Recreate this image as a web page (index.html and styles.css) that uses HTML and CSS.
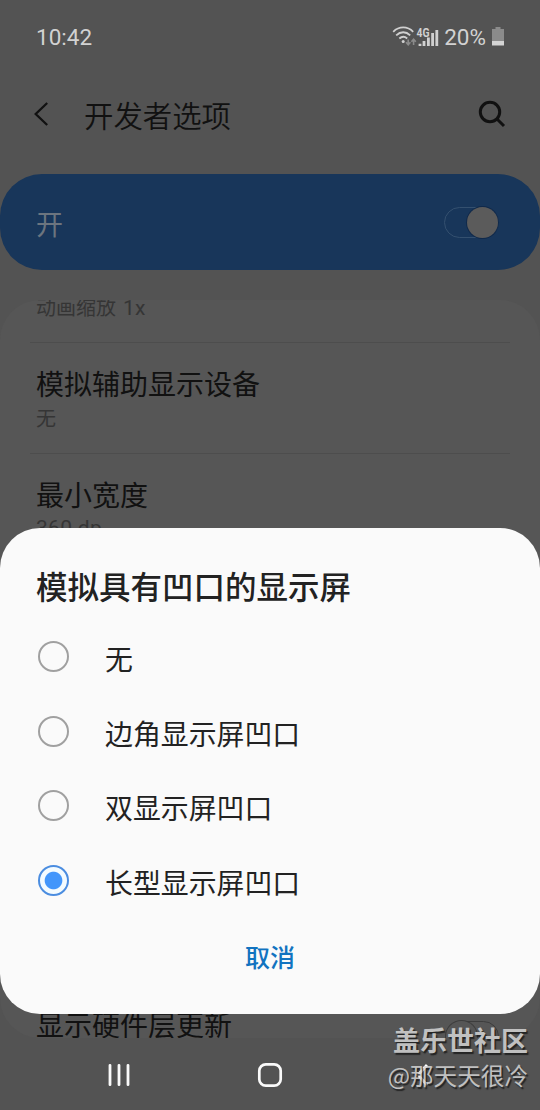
FILE: index.html
```html
<!DOCTYPE html>
<html lang="zh-CN">
<head>
<meta charset="utf-8">
<title>开发者选项</title>
<link rel="stylesheet" href="styles.css">
</head>
<body>
<div class="phone">
  <div class="status">
    <span class="clock">10:42</span>
    <div class="status-icons">
      <svg class="net" width="48" height="24" viewBox="0 0 48 24">
        <g fill="none" stroke="#d0d0d0" stroke-width="1.8">
          <path d="M1.2 6.8C7 1 15.500 1 21.200 6.800"/>
          <path d="M4.200 10.300C8.500 6.200 14 6.200 18.200 10.300"/>
          <path d="M7.300 13.500C9.800 11.300 12.800 11.300 15.200 13.500"/>
        </g>
        <circle cx="11.200" cy="16.500" r="1.500" fill="#d0d0d0"/>
        <path d="M16.200 14.500v5M14 17.200l2.200 2.500 2.200-2.500M21.600 20v-5M19.400 16.800l2.200-2.500 2.200 2.500" fill="none" stroke="#8b8b8b" stroke-width="1.600"/>
        <path d="M28 21v-2.200M32 21v-5M36.400 21v-8.500M40.600 21V8M44.800 21V5" stroke="#d0d0d0" stroke-width="2.800"/>
        <text class="net-type" x="24.500" y="12" textLength="13" lengthAdjust="spacingAndGlyphs">4G</text>
      </svg>
      <span class="percent">20%</span>
      <svg class="battery" width="12" height="19" viewBox="0 0 12 19"><path d="M3.500 0h5v2H12v12H0V2h3.500z" fill="#8b8b8b"/><path d="M0 14h12v4.500H0z" fill="#d4d4d4"/></svg>
    </div>
  </div>
  <header class="header">
    <svg width="16" height="26" viewBox="0 0 16 26"><path d="M14.200 2L2.700 13l11.500 11" fill="none" stroke="#111" stroke-width="2.300"/></svg>
    <h1 class="title">开发者选项</h1>
    <svg width="28" height="28" viewBox="0 0 28 28" fill="none" stroke="#111" stroke-width="3"><circle cx="12" cy="12" r="9.700"/><path d="M19 19l7 7"/></svg>
  </header>
  <div class="master">
    <span>开</span>
    <div class="switch"><div class="knob"></div></div>
  </div>
  <main class="card">
    <div class="row first"><div class="sub">动画缩放 <span class="latin scale">1x</span></div></div>
    <div class="row"><div class="name">模拟辅助显示设备</div><div class="sub">无</div></div>
    <div class="row"><div class="name">最小宽度</div><div class="sub dpi"><span class="latin">360 dp</span></div></div>
    <div class="row last"><div class="name">显示硬件层更新</div><div class="switch off"><div class="knob"></div></div></div>
  </main>
  <nav class="nav">
    <svg width="24" height="26" viewBox="0 0 24 26"><path d="M3 3.300v19.400M12 3.300v19.400M21 3.300v19.400" stroke="#fafafa" stroke-width="2.800" stroke-linecap="round"/></svg>
    <svg width="26" height="26" viewBox="0 0 26 26"><rect x="2.300" y="2.300" width="21.400" height="21.400" rx="6.500" fill="none" stroke="#fafafa" stroke-width="2.700"/></svg>
    <svg width="24" height="26" viewBox="0 0 24 26"><path d="M18 3L9 13l9 10" fill="none" stroke="#fff" stroke-width="2.800"/></svg>
  </nav>
  <section class="dialog">
    <h2 class="dialog-title">模拟具有凹口的显示屏</h2>
    <div class="option"><i class="radio"></i><span>无</span></div>
    <div class="option"><i class="radio"></i><span>边角显示屏凹口</span></div>
    <div class="option"><i class="radio"></i><span>双显示屏凹口</span></div>
    <div class="option"><i class="radio checked"></i><span>长型显示屏凹口</span></div>
    <div class="cancel">取消</div>
  </section>
  <div class="watermark">
    <div class="community">盖乐世社区</div>
    <div class="author">@那天天很冷</div>
  </div>
</div>
</body>
</html>
```
FILE: styles.css
```css
* { box-sizing: border-box; }
body { margin: 0; font-family: Roboto, "Noto Sans CJK SC", sans-serif; }
svg { display: block; flex: none; }
.phone {
  position: relative;
  width: 540px;
  height: 1110px;
  overflow: hidden;
  background: #535353;
  display: flex;
  flex-direction: column;
}
.status {
  height: 74px;
  padding: 0 36px;
  display: flex;
  align-items: center;
  justify-content: space-between;
  color: #d2d2d2;
  font-size: 22.500px;
  line-height: 30px;
}
.status-icons { display: flex; align-items: center; }
.net-type { font: 700 12px Roboto, sans-serif; fill: #d0d0d0; }
.percent { margin: 0 6px 0 4px; }
.battery { margin-top: -2px; }
.header {
  height: 80px;
  margin-bottom: 20px;
  padding: 0 34px 0 33px;
  display: flex;
  align-items: center;
}
.title {
  flex: 1;
  margin: 0 0 0 35px;
  padding-top: 5px;
  color: #111;
  font-size: 29.400px;
  font-weight: 350;
  line-height: 40px;
}
.master {
  height: 96px;
  margin-bottom: 30px;
  padding: 0 41px 0 36px;
  border-radius: 42px;
  background: #18365a;
  color: #6c757f;
  font-size: 27px;
  display: flex;
  align-items: center;
  justify-content: space-between;
}
.master span { padding-top: 2px; }
.switch {
  width: 55px;
  height: 31px;
  border: 1px solid #34506f;
  border-radius: 16px;
  display: flex;
  justify-content: flex-end;
  align-items: center;
}
.knob {
  flex: none;
  width: 31px;
  height: 31px;
  border-radius: 50%;
  background: #5b5b5b;
  box-shadow: 0 0 0 1px #10294a;
}
.card {
  height: 738px;
  border-radius: 40px;
  background: #565656;
  overflow: hidden;
  display: flex;
  flex-direction: column;
}
.row { height: 111px; padding: 23px 36px 0; flex: none; background: linear-gradient(#4d4d4d, #4d4d4d) 30px 100% / 480px 1px no-repeat; }
.first { height: 43px; padding-top: 0; }
.first .sub { margin-top: -5px; }
.name { font-size: 28px; line-height: 40px; color: #111; }
.sub { font-size: 20px; line-height: 26px; color: #353535; }
.latin { font-size: 21px; letter-spacing: 0.300px; }
.scale { margin-left: 2px; }
.dpi { margin-top: -2px; }
.last {
  height: 46px;
  margin-top: auto;
  padding-top: 23px;
  background: none;
  display: flex;
  justify-content: space-between;
  align-items: center;
}
.off { width: 54px; flex: none; margin-top: 19px; border-color: #3d3d3d; justify-content: flex-start; margin-right: 5px; }
.off .knob { background: #565656; box-shadow: 0 0 0 1px #3d3d3d; }
.nav {
  height: 72px;
  padding: 2px 107px 0;
  display: flex;
  align-items: center;
  justify-content: space-between;
}
.dialog {
  position: absolute;
  left: 0;
  right: 0;
  top: 528px;
  height: 486px;
  padding: 38px 36px 0;
  border-radius: 40px;
  background: #fafafa;
  color: #222;
}
.dialog-title { margin: 0 0 17px; font-size: 31.500px; font-weight: 500; line-height: 46px; }
.option {
  height: 74.500px;
  padding-left: 2px;
  display: flex;
  align-items: flex-start;
  padding-top: 12px;
  gap: 36px;
  font-size: 27.900px;
  line-height: 39px;
}
.radio {
  flex: none;
  width: 31px;
  height: 31px;
  border: 2px solid #a0a0a0;
  border-radius: 50%;
}
.checked { border-color: #4b8de0; background: radial-gradient(circle, #4296fb 8.300px, #f3fbff 9.300px); }
.cancel { margin-top: 14px; text-align: center; color: #1173c0; font-size: 25px; font-weight: 500; line-height: 36px; }
.watermark { position: absolute; right: 12px; top: 1024px; text-align: right; color: #d4d4d4; text-shadow: 1.500px 1.500px 1px #1c1c1c; opacity: 0.85; }
.community { font-size: 27px; font-weight: 700; line-height: 36px; }
.author { font-family: "Noto Sans CJK SC", sans-serif; font-size: 23.600px; line-height: 31px; }
```
